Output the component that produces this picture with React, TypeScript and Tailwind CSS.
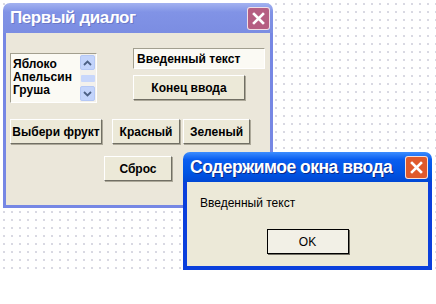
const ui = "font-['Liberation_Sans',Arial,sans-serif]";

const Bevel = ({ w, children }: { w: string; children: React.ReactNode }) => (
  <div
    className={`${w} h-[25px] flex items-center justify-center bg-[#ece9d8] border border-t-white border-l-white border-r-[#716f64] border-b-[#716f64] shadow-[1px_1px_0_#aca899] text-[12px] font-bold text-black`}
  >
    {children}
  </div>
);

const CloseX = ({ bg }: { bg: string }) => (
  <div className={`w-[23px] h-[23px] shrink-0 rounded-[3px] border border-white/80 flex items-center justify-center ${bg}`}>
    <svg width="13" height="13" viewBox="0 0 13 13">
      <path d="M2 2 L11 11 M11 2 L2 11" stroke="white" strokeWidth="2.6" strokeLinecap="square" />
    </svg>
  </div>
);

const Arrow = ({ up }: { up?: boolean }) => (
  <div className="h-[15px] w-[15px] bg-[#c3d4fb] border border-[#b5c8f5] rounded-[2px] flex items-center justify-center">
    <svg width="9" height="6" viewBox="0 0 9 6">
      <path d={up ? "M1 5 L4.5 1.5 L8 5" : "M1 1 L4.5 4.5 L8 1"} stroke="#4d6185" strokeWidth="1.8" fill="none" />
    </svg>
  </div>
);

export default function App() {
  return (
    <div className={`relative w-[436px] h-[304px] overflow-hidden bg-white ${ui}`}>
      <div className="absolute left-0 top-0 w-[436px] h-[272px] bg-[radial-gradient(circle,#d8d8e2_0.7px,transparent_1px)] bg-[length:8px_8px]" />

      {/* first dialog (inactive) */}
      <div className="absolute left-[3px] top-[3px] w-[270px] h-[205px] flex flex-col">
        <div className="h-[30px] rounded-t-[7px] bg-[linear-gradient(#a3b2f0,#8193e6_30%,#7b8de2)] flex items-center justify-between pl-[7px] pr-[3px]">
          <span className="whitespace-nowrap text-white font-bold text-[17px] tracking-[-0.4px] [text-shadow:1px_1px_0_#6a78c8]">Первый диалог</span>
          <CloseX bg="bg-[#b55e82]" />
        </div>
        <div className="flex-1 bg-[#ebe7da] border-x-[3px] border-b-[3px] border-[#7687e4] pl-[4px] pt-[15px]">
          <div className="flex">
            <div className="mt-[5px] w-[87px] h-[50px] bg-[#fbfaf4] border border-t-[#a29f8f] border-l-[#a29f8f] border-r-white border-b-white flex">
              <div className="flex-1 pl-[2px] pt-[4px] text-[12px] font-bold leading-[13px] text-black">
                <div>Яблоко</div>
                <div>Апельсин</div>
                <div>Груша</div>
              </div>
              <div className="w-[16px] flex flex-col justify-between py-[1px] bg-[#f3f1ec]">
                <Arrow up />
                <div className="h-[7px] mx-[1px] bg-[#c8d7fb] rounded-[1px]" />
                <Arrow />
              </div>
            </div>
            <div className="ml-[36px] flex flex-col">
              <div className="w-[132px] h-[21px] bg-[#fbfaf4] border border-t-[#a29f8f] border-l-[#a29f8f] border-r-white border-b-white pl-[3px] flex items-center text-[12px] font-bold text-black">
                Введенный текст
              </div>
              <div className="mt-[6px]">
                <Bevel w="w-[112px]">Конец ввода</Bevel>
              </div>
            </div>
          </div>
          <div className="flex mt-[16px]">
            <Bevel w="w-[92px]">Выбери фрукт</Bevel>
            <div className="ml-[10px]">
              <Bevel w="w-[68px]">Красный</Bevel>
            </div>
            <div className="ml-[3px]">
              <Bevel w="w-[67px]">Зеленый</Bevel>
            </div>
          </div>
          <div className="mt-[12px] ml-[94px]">
            <Bevel w="w-[68px]">Сброс</Bevel>
          </div>
        </div>
      </div>

      {/* second dialog (active) */}
      <div className="absolute left-[183px] top-[152px] w-[249px] h-[118px] flex flex-col">
        <div className="h-[30px] rounded-t-[7px] bg-[linear-gradient(#3c8dff,#0a5ef0_25%,#0054e3_70%,#0047d4)] flex items-center justify-between pl-[7px] pr-[4px]">
          <span className="whitespace-nowrap text-white font-bold text-[17.5px] tracking-[-0.5px] [text-shadow:1px_1px_0_#0a2a8c]">Содержимое окна ввода</span>
          <CloseX bg="bg-[#e05a2c]" />
        </div>
        <div className="flex-1 bg-[#ece9d8] border-x-[4px] border-b-[4px] border-[#0a3fdc] flex flex-col">
          <div className="pl-[13px] pt-[14px] text-[12px] leading-[14px] text-black">Введенный текст</div>
          <div className="mt-[19px] self-center w-[82px] h-[25px] bg-[#f2f0e6] border border-black shadow-[1px_1px_0_#716f64] flex items-center justify-center text-[12px] text-black">
            OK
          </div>
        </div>
      </div>
    </div>
  );
}
